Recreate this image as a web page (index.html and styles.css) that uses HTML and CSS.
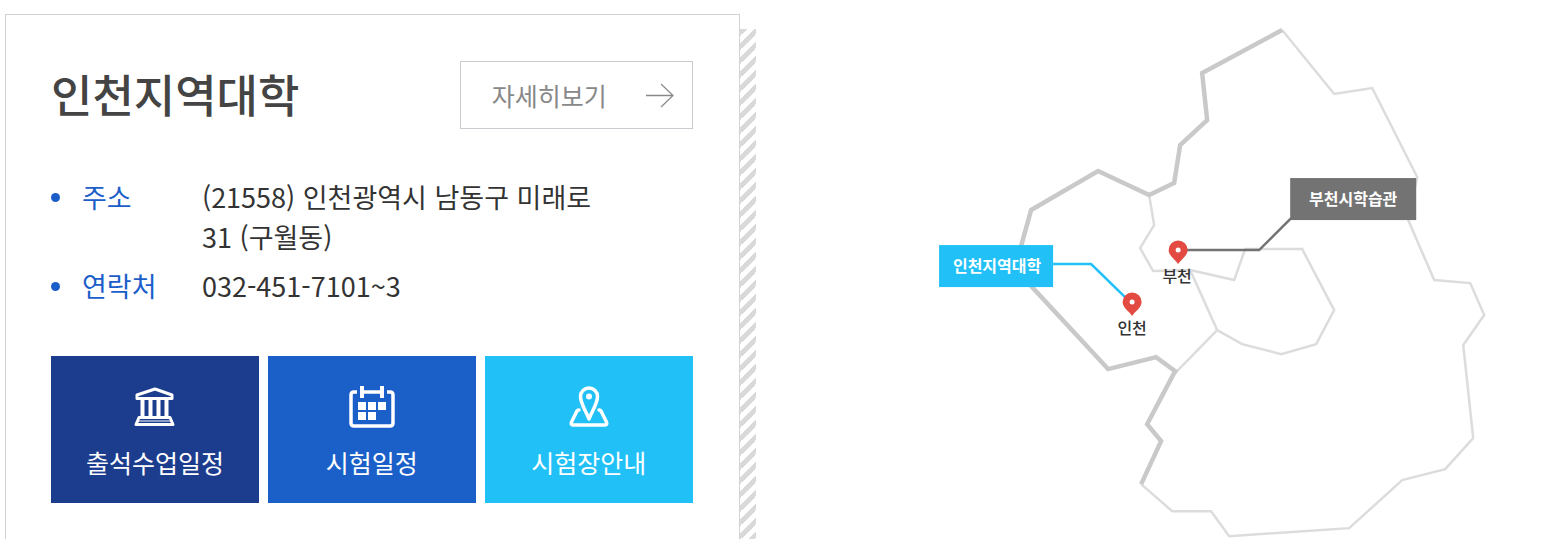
FILE: index.html
```html
<!DOCTYPE html>
<html lang="ko">

<head>
    <meta charset="UTF-8">
    <meta name="viewport" content="width=device-width, initial-scale=1">
    <title>인천지역대학</title>
    <link rel="stylesheet" href="styles.css">
</head>

<body>
    <main class="campus">
        <section class="card">
            <header class="card-head">
                <h1>인천지역대학</h1>
                <a class="more" href="#detail">
                    자세히보기
                    <svg class="arrow" viewBox="0 0 28 26" fill="none" stroke="currentColor" aria-hidden="true">
                        <path d="M0 13.5H27" stroke-width="1.5" />
                        <path d="M15 2L27 13.5L15 25" stroke-width="1.2" />
                    </svg>
                </a>
            </header>

            <dl class="info">
                <div class="info-row">
                    <dt>주소</dt>
                    <dd>(21558) 인천광역시 남동구 미래로 31 (구월동)</dd>
                </div>
                <div class="info-row">
                    <dt>연락처</dt>
                    <dd>032-451-7101~3</dd>
                </div>
            </dl>

            <nav class="tiles">
                <a class="tile navy" href="#class">
                    <svg viewBox="0 0 42 42" width="42" height="42" fill="none" stroke="currentColor" stroke-width="3" stroke-linejoin="round" aria-hidden="true">
                        <path d="M3 12.5V9L21 3L38 9V12.5Z" />
                        <path d="M8.5 13V31M16.5 13V31M24.5 13V31M32.5 13V31" stroke-width="4" />
                        <path d="M5 31.500H36L39 38.500H2Z" />
                        <path d="M4 35H37" stroke-width="1" />
                    </svg>
                    출석수업일정
                </a>
                <a class="tile blue" href="#exam">
                    <svg viewBox="0 0 46 42" width="46" height="42" fill="none" stroke="currentColor" stroke-width="3.5" aria-hidden="true">
                        <path d="M8 6H5Q2 6 2 9V37Q2 40 5 40H41Q44 40 44 37V9Q44 6 41 6H38M15 6H31" />
                        <path d="M13 0V12M33 0V12" stroke-width="4" />
                        <path d="M9 16h8v8h-8zM19 16h8v8h-8zM29 16h8v8h-8zM9 26h8v8h-8zM19 26h8v8h-8z" fill="currentColor" stroke="none" />
                    </svg>
                    시험일정
                </a>
                <a class="tile sky" href="#place">
                    <svg viewBox="0 0 40 42" width="40" height="42" fill="none" stroke="currentColor" stroke-width="3.5" stroke-linecap="round" stroke-linejoin="round" aria-hidden="true">
                        <path d="M20 33C18 27 11.5 18 11.5 10.5A8.5 8.5 0 0 1 28.5 10.5C28.5 18 22 27 20 33Z" />
                        <circle cx="20" cy="10.5" r="3" fill="currentColor" stroke="none" />
                        <path d="M10 24Q8 24 7 27L2.5 36Q1.5 39 4 39H36Q38.5 39 37.5 36L33 27Q32 24 30 24" />
                    </svg>
                    시험장안내
                </a>
            </nav>
        </section>

        <svg class="map" viewBox="755 0 787 539" fill="none" role="img" aria-label="인천, 부천 지도">
            <g class="district">
                <path d="M1282 30L1334 94L1372 88L1417 177L1408 220L1434 280L1470 283L1484 315L1463 345L1473 438L1445 469L1402 480L1349 528L1229 536L1211 511L1172 511L1141 484" />
                <path d="M1149 195L1154 225L1140 248L1153 271L1190 270L1234 280L1245 249H1302L1334 310L1316 344L1281 354L1242 344L1217 330L1175 373" />
                <path d="M1190 270L1217 330" />
            </g>
            <path class="coast" d="M1282 30L1202 73L1207 120L1180 145L1174 183L1149 195L1098 171L1031 210L1016 264L1032 287L1108 369L1156 357L1175 371L1147 424L1161 441L1141 484" />

            <path class="link-incheon" d="M1053 264H1091L1127 299" />
            <path class="link-bucheon" d="M1185 250H1259L1291 218" />

            <defs>
                <path id="pin" d="M0 14C-3 9 -9.5 6 -9.5 0A9.5 9.5 0 0 1 9.5 0C9.5 6 3 9 0 14Z" />
            </defs>
            <g class="pin">
                <use href="#pin" x="1132" y="302" />
                <circle cx="1132" cy="302" r="2.5" />
                <use href="#pin" x="1178" y="250" />
                <circle cx="1178" cy="250" r="2.5" />
            </g>
            <text class="city" x="1132" y="334">인천</text>
            <text class="city" x="1177" y="282">부천</text>

            <a href="#incheon">
                <rect class="label-incheon" x="939" y="245" width="114" height="42" />
                <text class="label" x="997" y="272">인천지역대학</text>
            </a>
            <a href="#bucheon">
                <rect class="label-bucheon" x="1290" y="178" width="126" height="42" />
                <text class="label" x="1353" y="205">부천시학습관</text>
            </a>
        </svg>
    </main>
</body>

</html>
```
FILE: styles.css
```css
* {
    box-sizing: border-box;
}

body {
    margin: 0;
    font-family: "Noto Sans CJK KR", sans-serif;
    color: #333;
    background-color: #fff;
}

a {
    color: inherit;
    text-decoration: none;
}

.campus {
    display: grid;
    grid-template-columns: 20fr 21fr;
    min-height: 100vh;
    padding-left: 5px;
}

.card {
    position: relative;
    margin: 14px 15px 0 0;
    padding: 46px 46px 36px 45px;
    border: 1px solid #d3d3d3;
    border-bottom: 0;
}

/* striped edge behind the card */
.card::after {
    content: "";
    position: absolute;
    top: 14px;
    bottom: 0;
    left: 100%;
    width: 16px;
    border-left: 1px solid #d3d3d3;
    background: linear-gradient(135deg, #d9d9d9 25%, #fff 25%, #fff 50%, #d9d9d9 50%, #d9d9d9 75%, #fff 75%) 0 0 / 14px 14px;
}

.card-head {
    display: flex;
    justify-content: space-between;
    align-items: flex-start;
}

h1 {
    margin: 0;
    font-size: 45px;
    font-weight: 500;
    line-height: 66px;
    color: #444;
}

.more {
    display: flex;
    align-items: center;
    justify-content: space-between;
    width: 233px;
    height: 68px;
    padding: 0 18px 0 31px;
    border: 1px solid #c9cbd0;
    font-size: 25px;
    color: #888;
}

.arrow {
    width: 28px;
    height: 26px;
}

.info {
    margin: 48px 0 50px;
    font-size: 27px;
    line-height: 40px;
}

.info-row {
    display: flex;
}

.info-row + .info-row {
    margin-top: 9px;
}

.info dt {
    display: flex;
    flex: 0 0 151px;
    color: #1b5ec9;
}

.info dt::before {
    content: "";
    width: 9px;
    height: 9px;
    margin: 16px 22px 0 0;
    border-radius: 50%;
    background-color: #1b5ec9;
}

.info dd {
    max-width: 400px;
    margin: 0;
}

.tiles {
    display: grid;
    grid-template-columns: repeat(3, 1fr);
    gap: 9px;
}

.tile {
    display: flex;
    flex-direction: column;
    align-items: center;
    gap: 15px;
    padding: 30px 0 22px;
    font-size: 25px;
    line-height: 38px;
    color: #fff;
}

.navy {
    background-color: #1c3c8e;
}

.blue {
    background-color: #1b5fc9;
}

.sky {
    background-color: #21c1f7;
}

.map {
    display: block;
    width: 100%;
}

.district {
    stroke: #dcdcdc;
    stroke-width: 2.5;
}

.coast {
    stroke: #c9c9c9;
    stroke-width: 4.5;
}

.link-incheon {
    stroke: #21c1f7;
    stroke-width: 2.5;
}

.link-bucheon {
    stroke: #737373;
    stroke-width: 2.5;
}

.pin use {
    fill: #e34b42;
}

.pin circle {
    fill: #fff;
}

.city,
.label {
    font-size: 16px;
    text-anchor: middle;
}

.city {
    font-weight: 500;
    fill: #333;
}

.label {
    font-weight: 700;
    fill: #fff;
}

.label-incheon {
    fill: #21c1f7;
}

.label-bucheon {
    fill: #737373;
}
```
